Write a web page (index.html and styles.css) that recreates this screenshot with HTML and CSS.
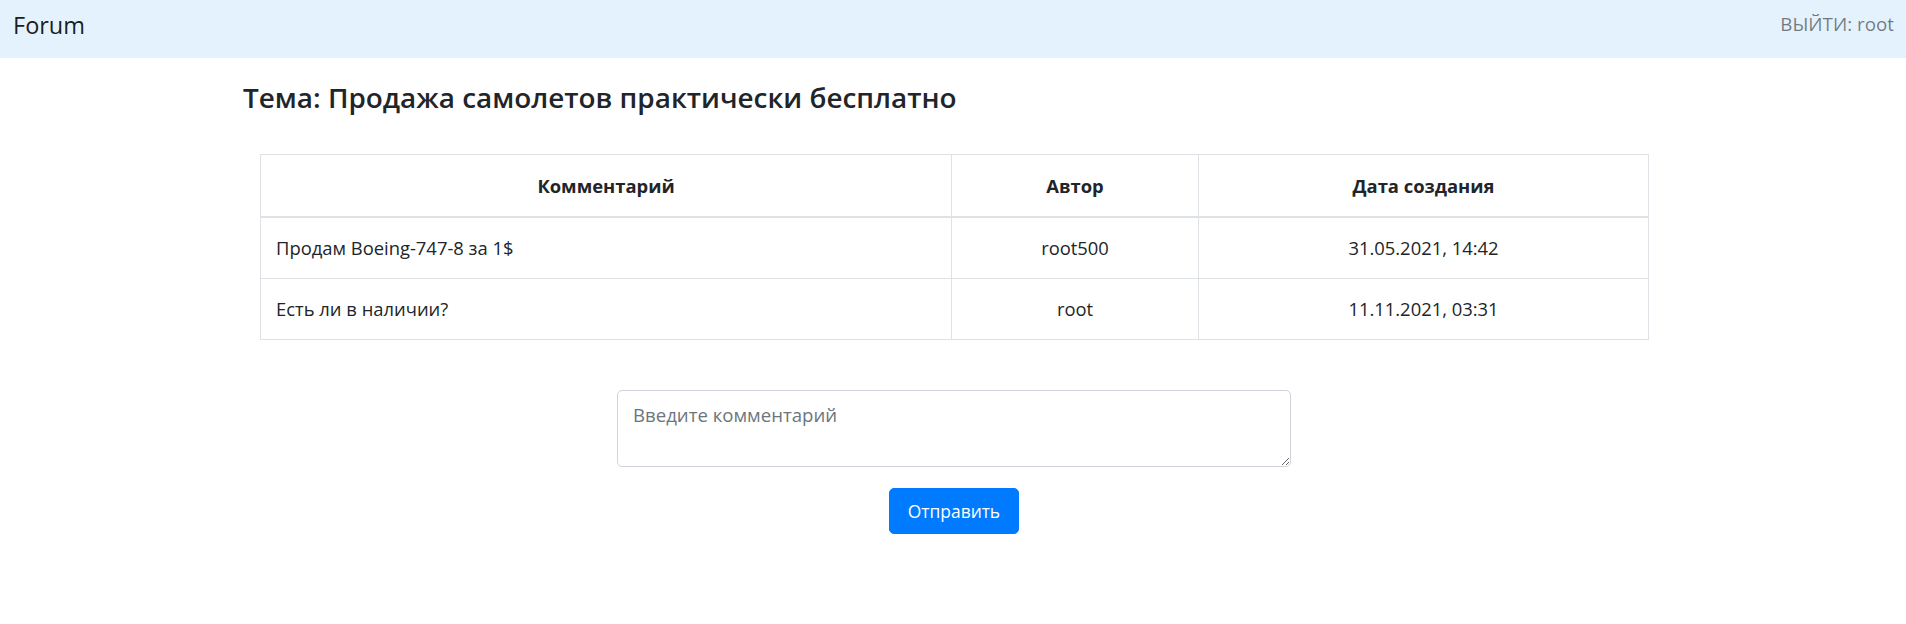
FILE: index.html
```html
<!DOCTYPE html>
<html lang="ru">
<head>
<meta charset="utf-8">
<title>Forum</title>
<link rel="stylesheet" href="styles.css">
</head>
<body>
<nav class="navbar">
  <a class="brand" href="#">Forum</a>
  <a class="nav-link" href="#">ВЫЙТИ: root</a>
</nav>
<main class="page">
  <h4 class="topic-title">Тема: Продажа самолетов практически бесплатно</h4>
  <table class="comments">
    <colgroup>
      <col class="col-comment">
      <col class="col-author">
      <col class="col-date">
    </colgroup>
    <thead>
      <tr>
        <th>Комментарий</th>
        <th>Автор</th>
        <th>Дата создания</th>
      </tr>
    </thead>
    <tbody>
      <tr>
        <td class="text-left">Продам Boeing-747-8 за 1$</td>
        <td>root500</td>
        <td>31.05.2021, 14:42</td>
      </tr>
      <tr>
        <td class="text-left">Есть ли в наличии?</td>
        <td>root</td>
        <td>11.11.2021, 03:31</td>
      </tr>
    </tbody>
  </table>
  <form class="comment-form">
    <textarea class="comment-input" rows="2" placeholder="Введите комментарий"></textarea>
    <button type="button" class="btn-primary">Отправить</button>
  </form>
</main>
</body>
</html>
```
FILE: styles.css
```css
* { box-sizing: border-box; }

body {
  margin: 0;
  font-family: "Open Sans", "Noto Sans", sans-serif;
  color: #212529;
  background: #fff;
}

.navbar {
  display: flex;
  justify-content: space-between;
  align-items: flex-start;
  height: 58px;
  padding: 0 12px 0 13px;
  background: #e3f2fd;
}

.brand {
  padding-top: 6.5px;
  font-size: 23.5px;
  line-height: 37.5px;
  color: rgba(0, 0, 0, 0.9);
  text-decoration: none;
}

.nav-link {
  padding-top: 9px;
  font-size: 18.8px;
  line-height: 30px;
  color: rgba(0, 0, 0, 0.5);
  text-decoration: none;
}

.page {
  width: 1388px;
  margin-left: calc(50% - 693px);
}

.topic-title {
  margin: 23px 0 40px -17px;
  font-size: 27.9px;
  font-weight: 600;
  line-height: 33.4px;
}

.comments {
  width: 1388px;
  table-layout: fixed;
  border-collapse: collapse;
  border: 1px solid #dee2e6;
}

.col-comment { width: 691px; }
.col-author { width: 247px; }
.col-date { width: 450px; }

.comments th {
  padding: 15px;
  font-size: 18.4px;
  font-weight: 700;
  line-height: 31px;
  text-align: center;
  border: 1px solid #dee2e6;
  border-bottom: 2px solid #dee2e6;
}

.comments td {
  padding: 15px;
  font-size: 18.4px;
  line-height: 30px;
  text-align: center;
  border: 1px solid #dee2e6;
}

.comments td.text-left { text-align: left; }

.comment-form {
  display: flex;
  flex-direction: column;
  align-items: center;
  padding-top: 50px;
}

.comment-input {
  display: block;
  width: 674px;
  height: 77px;
  padding: 9px 15px 6px;
  font-family: inherit;
  font-size: 18.6px;
  line-height: 30px;
  color: #495057;
  background: #fff;
  border: 1px solid #ced4da;
  border-radius: 5px;
  resize: vertical;
}

.comment-input::placeholder { color: #6c757d; }

.btn-primary {
  margin-top: 21px;
  width: 130px;
  height: 46px;
  padding: 0;
  font-family: inherit;
  font-size: 17.4px;
  line-height: 30px;
  color: #fff;
  background: #007bff;
  border: 1px solid #007bff;
  border-radius: 5px;
}
```
